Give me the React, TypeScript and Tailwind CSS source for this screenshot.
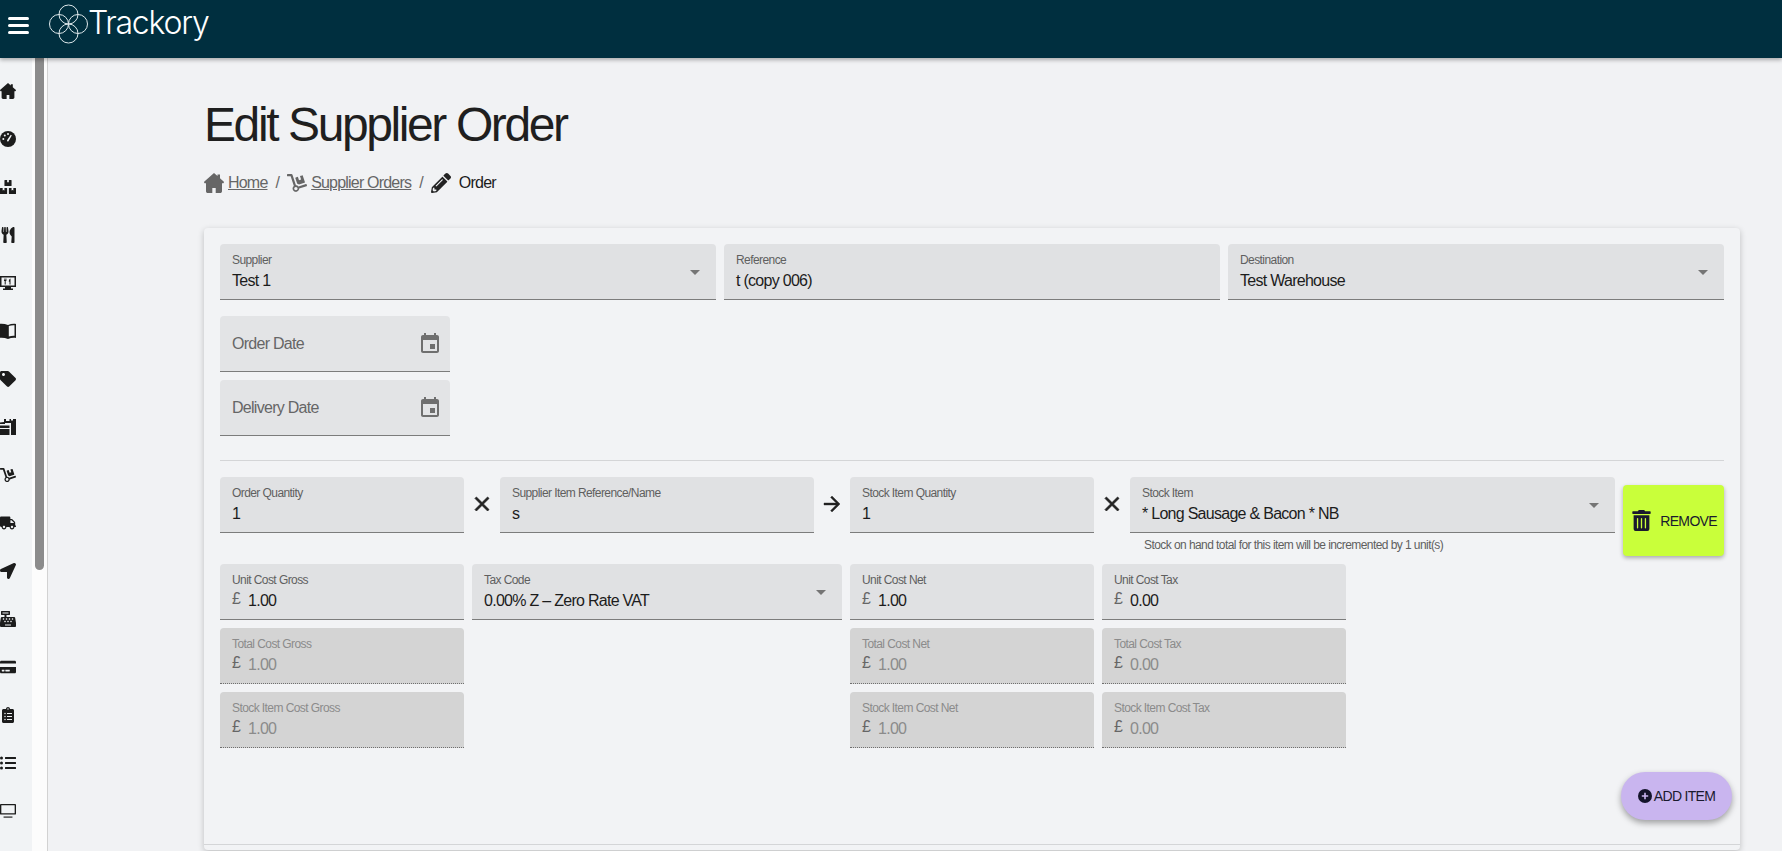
import type { ReactNode } from 'react';
import {
  FaBoxes,
  FaCashRegister,
  FaClipboardList,
  FaCreditCard,
  FaDolly,
  FaListUl,
  FaLocationArrow,
  FaPencilAlt,
  FaTag,
  FaTrashAlt,
  FaTruck,
  FaUtensils,
} from 'react-icons/fa';

function HomeIcon({ className }: { className: string }) {
  return (
    <svg viewBox="0 0 20 20" className={className} fill="currentColor" fillRule="evenodd">
      <path d="M10 0l3.500 3.100V1.500h2.500v3.800l3.600 3.200c.7.7.2 1.700-.7 1.700H18v8c0 1-.8 1.800-1.800 1.800H3.800C2.800 20 2 19.200 2 18.200v-8h-.9C.2 10.200-.3 9.200.4 8.500zM8.300 15v5h3.400v-5z" />
    </svg>
  );
}

function GaugeIcon() {
  return (
    <svg viewBox="0 0 16 16" className="h-4 w-4">
      <circle cx="8" cy="8" r="8" fill="currentColor" />
      <path d="M7 9.200l3.800-5.400 1 .7-3.300 5.800a1.100 1.100 0 0 1-1.500-1.100z" fill="#f1f3f5" />
      <circle cx="3.300" cy="8" r="1" fill="#f1f3f5" />
      <circle cx="4.800" cy="4.500" r="1" fill="#f1f3f5" />
      <circle cx="8" cy="3" r="1" fill="#f1f3f5" />
    </svg>
  );
}

function MonitorIcon() {
  return (
    <svg viewBox="0 0 16 16" className="h-4 w-4" fill="currentColor">
      <path d="M0 1h16v11h-5v1.500h2V15H3v-1.500h2V12H0zM1.500 2.500v8h13v-8z" />
      <path d="M4 3.500v2.500h.7v3.500h1V6h.7V3.500h-.5V5h-.4V3.500h-.6V5h-.4V3.500zM9.500 9.500h1V3.500c-1 .4-1.700 1.500-1.700 3.300h.7z" />
    </svg>
  );
}

function BookIcon() {
  return (
    <svg viewBox="0 0 16 16" className="h-4 w-4" fill="currentColor" fillRule="evenodd">
      <path d="M-2 1c3.500-.5 7-.3 10 .9 2.500-1 5.300-1.300 8-1v14c-2.700-.3-5.500 0-8 1-3-1.200-6.500-1.400-10-.9zM8.800 3v10.500c1.800-.6 3.700-.8 5.700-.7V2.300c-2-.1-3.900.1-5.700.7z" />
    </svg>
  );
}

function StoreIcon() {
  return (
    <svg viewBox="0 0 16 16" className="h-4 w-4" fill="currentColor">
      <path d="M4 0h2v2h3.500V0H11v1.500h2V0h3v16h-5V4H5v1H0V3.500L4 3z" />
      <path d="M0 6.500h9.500V9H0zM0 10h9.500v6H0z" />
    </svg>
  );
}

function DesktopIcon() {
  return (
    <svg viewBox="0 0 18 16" className="h-4 w-[18px]" fill="currentColor">
      <path d="M1 0h16c.6 0 1 .4 1 1v10c0 .6-.4 1-1 1H1c-.6 0-1-.4-1-1V1c0-.6.4-1 1-1zm.500 1.500v9h15v-9z" />
      <path d="M4 14.200h10v1.300H4z" />
    </svg>
  );
}

function CalendarIcon() {
  return (
    <svg viewBox="0 0 24 24" className="h-6 w-6" fill="#6f6f6f">
      <path d="M17 12h-5v5h5v-5zM16 1v2H8V1H6v2H5c-1.110 0-1.990.9-1.990 2L3 19c0 1.100.89 2 2 2h14c1.100 0 2-.9 2-2V5c0-1.100-.9-2-2-2h-1V1h-2zm3 18H5V8h14v11z" />
    </svg>
  );
}

function CloseIcon() {
  return (
    <svg viewBox="0 0 24 24" className="h-6 w-6" fill="#222222" stroke="#222222" strokeWidth="0.8">
      <path d="M19 6.410L17.590 5 12 10.590 6.410 5 5 6.410 10.590 12 5 17.590 6.410 19 12 13.410 17.590 19 19 17.590 13.410 12z" />
    </svg>
  );
}

function ArrowIcon() {
  return (
    <svg viewBox="0 0 24 24" className="h-6 w-6" fill="#222222" stroke="#222222" strokeWidth="0.4">
      <path d="M12 4l-1.410 1.410L16.170 11H4v2h12.170l-5.580 5.590L12 20l8-8z" />
    </svg>
  );
}

function Logo() {
  return (
    <svg viewBox="0 0 40 40" className="h-10 w-10" fill="none" stroke="#dfe9ec" strokeWidth="1">
      <circle cx="19.500" cy="10.500" r="9.500" />
      <circle cx="29" cy="20" r="9.500" />
      <circle cx="19.500" cy="29.500" r="9.500" />
      <circle cx="10" cy="20" r="9.500" />
    </svg>
  );
}

interface FieldProps {
  label: string;
  value?: string;
  disabled?: boolean;
  select?: boolean;
  money?: boolean;
  className?: string;
}

function Field({ label, value, disabled, select, money, className = '' }: FieldProps) {
  return (
    <div
      className={`relative h-14 rounded-t px-3 pt-2 ${
        disabled
          ? 'border-b border-dotted border-[#6f6f6f] bg-[#d4d4d4]'
          : 'border-b border-[#7c7c7c] bg-[#e0e1e3]'
      } ${className}`}
    >
      <div
        className={`text-xs leading-4 tracking-[-0.58px] ${disabled ? 'text-[#8b8b8b]' : 'text-[#5f5f5f]'}`}
      >
        {label}
      </div>
      <div className="mt-[3px] flex items-center text-base leading-5 tracking-[-0.72px]">
        {money && <span className="w-4 -translate-y-[2px] text-[#666666]">£</span>}
        <span className={disabled ? 'text-[#8b8b8b]' : 'text-[#1c1c1c]'}>{value}</span>
      </div>
      {select && (
        <svg viewBox="0 0 24 24" className="absolute top-4 right-[9px] h-6 w-6" fill="#757575">
          <path d="M7 10l5 5 5-5z" />
        </svg>
      )}
    </div>
  );
}

function DateField({ label }: { label: string }) {
  return (
    <div className="flex h-14 w-[230px] items-center justify-between rounded-t border-b border-[#7c7c7c] bg-[#e3e4e6] pr-2 pl-3">
      <span className="text-base tracking-[-0.72px] text-[#666666]">{label}</span>
      <CalendarIcon />
    </div>
  );
}

function Crumb({ icon, text }: { icon: ReactNode; text: string }) {
  return (
    <span className="flex items-center gap-1 text-[#666666]">
      {icon}
      <span className="underline">{text}</span>
    </span>
  );
}

const navIcons: ReactNode[] = [
  <HomeIcon key="home" className="h-4 w-4" />,
  <GaugeIcon key="dash" />,
  <FaBoxes key="boxes" />,
  <FaUtensils key="menu" />,
  <MonitorIcon key="screen" />,
  <BookIcon key="book" />,
  <FaTag key="tag" />,
  <StoreIcon key="store" />,
  <FaDolly key="dolly" />,
  <FaTruck key="truck" />,
  <FaLocationArrow key="arrow" />,
  <FaCashRegister key="cash" />,
  <FaCreditCard key="card" />,
  <FaClipboardList key="clip" />,
  <FaListUl key="list" />,
  <DesktopIcon key="desktop" />,
];

export default function App() {
  return (
    <div className="relative flex h-[851px] w-[1782px] flex-col overflow-hidden bg-[#f1f2f4] font-['Liberation_Sans',sans-serif]">
      <header className="relative z-10 flex h-[58px] shrink-0 items-start bg-[#002f3f] shadow-[0_2px_4px_rgba(0,0,0,0.3)]">
        <div className="mt-[17px] ml-2 flex w-[21px] flex-col gap-1">
          <span className="h-[3px] rounded-full bg-white" />
          <span className="h-[3px] rounded-full bg-white" />
          <span className="h-[3px] rounded-full bg-white" />
        </div>
        <div className="mt-1 ml-5 flex items-center">
          <Logo />
          <span className="-mt-[3px] -ml-[1px] font-['Inter',sans-serif] text-[32px] leading-10 font-light tracking-[-1.25px] text-white">
            Trackory
          </span>
        </div>
      </header>

      <div className="flex min-h-0 flex-1">
        <nav className="flex w-8 shrink-0 flex-col bg-[#f1f3f5] pt-[9px] text-[#1c1c1c]">
          {navIcons.map((icon, i) => (
            <div key={i} className="flex h-12 w-4 shrink-0 items-center justify-center text-base">
              {icon}
            </div>
          ))}
        </nav>
        <div className="w-4 shrink-0 border-r border-[#d2d2d2] bg-[#fcfcfc] px-[3px]">
          <div className="h-[512px] rounded-b-lg bg-[#8c8c8c]" />
        </div>

        <main className="min-w-0 flex-1 pt-[39px] pl-[156px] text-[#1c1c1c]">
          <h1 className="text-5xl leading-14 tracking-[-2.4px] text-[#1f1f1f]">Edit Supplier Order</h1>
          <div className="mt-[18px] flex h-6 items-center text-base tracking-[-0.8px]">
            <Crumb icon={<HomeIcon className="h-5 w-5" />} text="Home" />
            <span className="mx-2 text-[#666666]">/</span>
            <Crumb icon={<FaDolly className="text-xl" />} text="Supplier Orders" />
            <span className="mx-2 text-[#666666]">/</span>
            <FaPencilAlt className="text-xl text-[#222222]" />
            <span className="ml-2">Order</span>
          </div>

          <section className="mt-[33px] w-[1536px] rounded bg-[#f2f3f5] px-4 pt-4 pb-[5px] shadow-[0_2px_6px_rgba(0,0,0,0.22)]">
            <div className="flex gap-2">
              <Field className="w-[496px]" label="Supplier" value="Test 1" select />
              <Field className="w-[496px]" label="Reference" value="t (copy 006)" />
              <Field className="w-[496px]" label="Destination" value="Test Warehouse" select />
            </div>
            <div className="mt-4 flex flex-col gap-2">
              <DateField label="Order Date" />
              <DateField label="Delivery Date" />
            </div>
            <div className="mt-6 h-px bg-[#d4d5d7]" />

            <div className="mt-4 flex items-start">
              <Field className="w-[244px]" label="Order Quantity" value="1" />
              <div className="flex h-[54px] w-9 items-center justify-center">
                <CloseIcon />
              </div>
              <Field className="w-[314px]" label="Supplier Item Reference/Name" value="s" />
              <div className="flex h-[54px] w-9 items-center justify-center">
                <ArrowIcon />
              </div>
              <Field className="w-[244px]" label="Stock Item Quantity" value="1" />
              <div className="flex h-[54px] w-9 items-center justify-center">
                <CloseIcon />
              </div>
              <div className="w-[485px]">
                <Field label="Stock Item" value="* Long Sausage & Bacon * NB" select />
                <div className="mt-1 pl-[14px] text-xs leading-4 tracking-[-0.57px] text-[#5f5f5f]">
                  Stock on hand total for this item will be incremented by 1 unit(s)
                </div>
              </div>
              <button className="mt-2 ml-2 flex h-[71px] w-[101px] items-center justify-between rounded bg-[#c9ff3a] pr-[7px] pl-2 text-sm tracking-[-0.65px] text-[#1a1a2e] shadow-[0_2px_4px_rgba(0,0,0,0.3)]">
                <FaTrashAlt className="text-[21px]" />
                REMOVE
              </button>
            </div>

            <div className="mt-2 flex items-start gap-2">
              <div className="flex w-[244px] flex-col gap-2">
                <Field label="Unit Cost Gross" value="1.00" money />
                <Field label="Total Cost Gross" value="1.00" money disabled />
                <Field label="Stock Item Cost Gross" value="1.00" money disabled />
              </div>
              <Field className="w-[370px]" label="Tax Code" value="0.00% Z – Zero Rate VAT" select />
              <div className="flex w-[244px] flex-col gap-2">
                <Field label="Unit Cost Net" value="1.00" money />
                <Field label="Total Cost Net" value="1.00" money disabled />
                <Field label="Stock Item Cost Net" value="1.00" money disabled />
              </div>
              <div className="flex w-[244px] flex-col gap-2">
                <Field label="Unit Cost Tax" value="0.00" money />
                <Field label="Total Cost Tax" value="0.00" money disabled />
                <Field label="Stock Item Cost Tax" value="0.00" money disabled />
              </div>
            </div>
            <div className="-mx-4 mt-24 h-px bg-[#d4d5d7]" />
          </section>
        </main>
      </div>

      <button className="absolute top-[772px] left-[1621px] flex h-12 w-[111px] items-center justify-center gap-[2px] rounded-full bg-[#c9b5ef] text-sm tracking-[-0.7px] text-[#1a1a2e] shadow-[0_3px_6px_rgba(0,0,0,0.35)]">
        <svg viewBox="0 0 14 14" className="h-[14px] w-[14px]">
          <circle cx="7" cy="7" r="7" fill="#14142b" />
          <path d="M6.200 3.800h1.600v2.400h2.400v1.600H7.800v2.400H6.200V7.800H3.800V6.200h2.400z" fill="#c9b5ef" />
        </svg>
        ADD ITEM
      </button>
    </div>
  );
}
